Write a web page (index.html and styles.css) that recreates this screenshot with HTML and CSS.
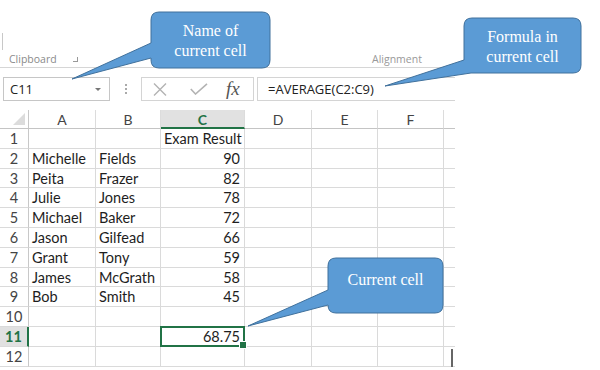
FILE: index.html
```html
<!DOCTYPE html>
<html>
<head>
<meta charset="utf-8">
<link rel="stylesheet" href="styles.css">
</head>
<body>
<div class="page">
  <div class="ribbon">
    <div class="ribbon-edge"></div>
    <div class="labels">
      <div class="glabel clip">Clipboard</div>
      <div class="launcher"></div>
      <div class="font-launcher"></div>
      <div class="glabel align">Alignment</div>
    </div>
  </div>

  <div class="fbar">
    <div class="namebox"><span class="nb-text">C11</span><span class="dd"></span></div>
    <div class="dots"><i></i><i></i><i></i></div>
    <div class="controls">
      <svg class="ic-x" width="14" height="13" viewBox="0 0 14 13"><path d="M1 0.5 L13 12.5 M13 0.5 L1 12.5" stroke="#b3b3b3" stroke-width="1.4" fill="none"/></svg>
      <svg class="ic-ok" width="18" height="12" viewBox="0 0 18 12"><path d="M0.8 6 L5.5 11 L17 0.8" stroke="#b3b3b3" stroke-width="1.6" fill="none"/></svg>
      <span class="fx">fx</span>
    </div>
    <div class="finput">=AVERAGE(C2:C9)</div>
  </div>

  <div class="sheet">
    <div class="ch corner"><span class="tri"></span></div>
    <div class="ch">A</div><div class="ch">B</div><div class="ch on">C</div><div class="ch">D</div><div class="ch">E</div><div class="ch">F</div><div class="ch end"></div>

    <div class="rh">1</div><div class="c"></div><div class="c"></div><div class="c">Exam Result</div><div class="c"></div><div class="c"></div><div class="c"></div><div class="c end"></div>
    <div class="rh">2</div><div class="c">Michelle</div><div class="c">Fields</div><div class="c n">90</div><div class="c"></div><div class="c"></div><div class="c"></div><div class="c end"></div>
    <div class="rh">3</div><div class="c">Peita</div><div class="c">Frazer</div><div class="c n">82</div><div class="c"></div><div class="c"></div><div class="c"></div><div class="c end"></div>
    <div class="rh">4</div><div class="c">Julie</div><div class="c">Jones</div><div class="c n">78</div><div class="c"></div><div class="c"></div><div class="c"></div><div class="c end"></div>
    <div class="rh">5</div><div class="c">Michael</div><div class="c">Baker</div><div class="c n">72</div><div class="c"></div><div class="c"></div><div class="c"></div><div class="c end"></div>
    <div class="rh">6</div><div class="c">Jason</div><div class="c">Gilfead</div><div class="c n">66</div><div class="c"></div><div class="c"></div><div class="c"></div><div class="c end"></div>
    <div class="rh">7</div><div class="c">Grant</div><div class="c">Tony</div><div class="c n">59</div><div class="c"></div><div class="c"></div><div class="c"></div><div class="c end"></div>
    <div class="rh">8</div><div class="c">James</div><div class="c">McGrath</div><div class="c n">58</div><div class="c"></div><div class="c"></div><div class="c"></div><div class="c end"></div>
    <div class="rh">9</div><div class="c">Bob</div><div class="c">Smith</div><div class="c n">45</div><div class="c"></div><div class="c"></div><div class="c"></div><div class="c end"></div>
    <div class="rh">10</div><div class="c"></div><div class="c"></div><div class="c"></div><div class="c"></div><div class="c"></div><div class="c"></div><div class="c end"></div>
    <div class="rh on">11</div><div class="c"></div><div class="c"></div><div class="c n sel">68.75</div><div class="c"></div><div class="c"></div><div class="c"></div><div class="c end"></div>
    <div class="rh">12</div><div class="c"></div><div class="c"></div><div class="c"></div><div class="c"></div><div class="c"></div><div class="c"></div><div class="c end"><span class="vbar"></span></div>
  </div>

  <svg class="callouts" width="600" height="370" viewBox="0 0 600 370">
    <path class="bubble" d="M159,12 H262 Q270,12 270,20 V60 Q270,68 262,68 H159 Q151,68 151,60 V58 L72,79 L151,43 V20 Q151,12 159,12 Z"/>
    <text class="btext" x="210.5" y="36">Name of</text>
    <text class="btext" x="210.5" y="56">current cell</text>

    <path class="bubble" d="M472,18 H573 Q581,18 581,26 V65 Q581,73 573,73 H471 L385,86 L464,60 V26 Q464,18 472,18 Z"/>
    <text class="btext" x="522.5" y="42">Formula in</text>
    <text class="btext" x="522.5" y="62">current cell</text>

    <path class="bubble" d="M336,258 H435 Q443,258 443,266 V305 Q443,313 435,313 H336 Q328,313 328,305 L248,326 L328,290 V266 Q328,258 336,258 Z"/>
    <text class="btext" x="385.5" y="285">Current cell</text>
  </svg>
</div>
</body>
</html>
```

FILE: styles.css
```css
* { box-sizing: border-box; }
html, body { margin: 0; padding: 0; background: #fff; }
.page {
  position: relative;
  width: 600px;
  height: 370px;
  overflow: hidden;
  font-family: "Lato", "Open Sans", sans-serif;
  color: #222;
}

/* ribbon remnant */
.ribbon {
  width: 455px;
  height: 68px;
  border-bottom: 1px solid #d6d6d6;
  padding-top: 33px;
  display: flex;
  flex-direction: column;
}
.ribbon-edge {
  width: 3px;
  height: 17px;
  border-right: 1px solid #c8c8c8;
}
.labels {
  display: flex;
  align-items: flex-start;
  margin-top: 3px;
  height: 13px;
}
.glabel {
  font-family: "Open Sans", sans-serif;
  font-size: 10.5px;
  color: #8a8a8a;
  line-height: 13px;
  white-space: nowrap;
}
.clip { margin-left: 9px; width: 52px; }
.launcher {
  margin-left: 12px;
  margin-top: 4px;
  width: 5px;
  height: 5px;
  border-right: 1px solid #999;
  border-bottom: 1px solid #999;
}
.font-launcher {
  margin-left: 189px;
  margin-top: 6px;
  width: 3px;
  height: 3px;
  background: #444;
}
.align { margin-left: 102px; width: 54px; color: #999; }

/* formula bar */
.fbar {
  display: flex;
  align-items: stretch;
  height: 24px;
  margin-top: 9px;
}
.namebox {
  margin-left: 3px;
  width: 107px;
  border: 1px solid #c6c6c6;
  display: flex;
  align-items: center;
  justify-content: space-between;
  padding: 0 8px 0 6px;
  font-family: "Open Sans", sans-serif;
  font-size: 13px;
  color: #222;
}
.dd {
  width: 0;
  height: 0;
  border-left: 3px solid transparent;
  border-right: 3px solid transparent;
  border-top: 3px solid #777;
}
.dots {
  width: 31px;
  display: flex;
  flex-direction: column;
  align-items: center;
  justify-content: center;
  gap: 2px;
}
.dots i {
  display: block;
  width: 2px;
  height: 2px;
  background: #aaa;
}
.controls {
  width: 113px;
  border: 1px solid #d4d4d4;
  display: flex;
  align-items: center;
  padding-left: 11px;
}
.ic-ok { margin-left: 23px; }
.fx {
  margin-left: 18px;
  font-family: "Liberation Serif", serif;
  font-style: italic;
  font-size: 19px;
  color: #555;
  line-height: 1;
  margin-top: -2px;
}
.finput {
  margin-left: 3px;
  width: 198px;
  border: 1px solid #d4d4d4;
  border-right: none;
  padding-left: 10px;
  font-family: "Open Sans", sans-serif;
  font-size: 13px;
  line-height: 22px;
  color: #222;
}

/* sheet */
.sheet {
  margin-top: 9px;
  display: grid;
  grid-template-columns: 29px 67px 65px 84px 67px 66px 66px 11px;
  grid-template-rows: 19px repeat(12, 19.8px);
  width: 455px;
}
.ch, .rh, .c {
  border-right: 1px solid #dadada;
  border-bottom: 1px solid #dadada;
}
.ch {
  border-bottom-color: #c4c4c4;
  border-right-color: #dcdcdc;
  text-align: center;
  font-size: 14px;
  line-height: 19px;
  color: #444;
}
.ch.on {
  background: #e1e1e1;
  color: #217346;
  font-weight: bold;
  border-bottom: 2px solid #217346;
}
.corner {
  display: flex;
  align-items: flex-end;
  justify-content: flex-end;
  padding: 0 3px 3px 0;
  border-right-color: #c8c8c8;
}
.tri {
  width: 0;
  height: 0;
  border-left: 12px solid transparent;
  border-bottom: 12px solid #dcdcdc;
}
.rh {
  border-right-color: #c8c8c8;
  text-align: center;
  font-size: 14.5px;
  line-height: 20px;
  color: #444;
}
.rh.on {
  background: #e1e1e1;
  color: #217346;
  font-weight: bold;
  border-right: 2px solid #217346;
}
.c {
  font-size: 14.5px;
  line-height: 20px;
  padding: 0 3px;
  white-space: nowrap;
  color: #1e1e1e;
}
.c.n { text-align: right; padding-right: 4px; }
.end { border-right: none; }
.sel { position: relative; }
.sel::after {
  content: "";
  position: absolute;
  left: -1px;
  top: -1px;
  right: -1px;
  bottom: -1px;
  border: 2px solid #217346;
}
.sel::before {
  content: "";
  position: absolute;
  right: -3px;
  bottom: -3px;
  width: 6px;
  height: 6px;
  background: #217346;
  border: 1px solid #fff;
  z-index: 1;
}
.vbar {
  display: block;
  margin-left: auto;
  margin-right: -1px;
  margin-top: 2px;
  width: 2px;
  height: 18px;
  background: #666;
}

/* callouts */
.callouts {
  position: absolute;
  left: 0;
  top: 0;
  pointer-events: none;
}
.bubble {
  fill: #5b9bd5;
  stroke: #41719c;
  stroke-width: 1;
}
.btext {
  fill: #fff;
  font-family: "Liberation Serif", serif;
  font-size: 16px;
  text-anchor: middle;
}
```
